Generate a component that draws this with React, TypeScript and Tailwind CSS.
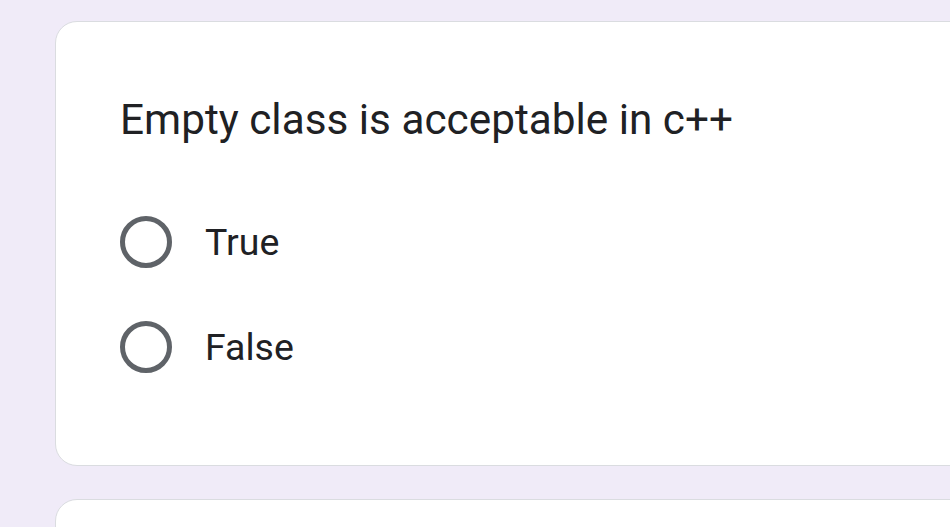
import React from "react";

const options = ["True", "False"];

function Radio() {
  return <div className="w-[52px] h-[52px] rounded-full border-[5px] border-[#5f6368] shrink-0" />;
}

export default function App() {
  return (
    <div className="h-[527px] overflow-hidden bg-[#f0ebf8] pl-[55px] pt-[21px]" style={{ fontFamily: "Roboto, sans-serif" }}>
      <div className="w-[1000px] h-[445px] bg-white border border-[#dadce0] rounded-[22px] pl-[64px] pt-[68px]">
        <h1 className="text-[42.3px] leading-[60px] text-[#202124]">Empty class is acceptable in c++</h1>
        <div className="mt-[66px] flex flex-col gap-[53px]">
          {options.map((o) => (
            <label key={o} className="flex items-center gap-[33px] h-[52px]">
              <Radio />
              <span className="text-[37.5px] text-[#202124]">{o}</span>
            </label>
          ))}
        </div>
      </div>
      <div className="mt-[33px] w-[1000px] h-[100px] bg-white border border-[#dadce0] rounded-[22px]" />
    </div>
  );
}
